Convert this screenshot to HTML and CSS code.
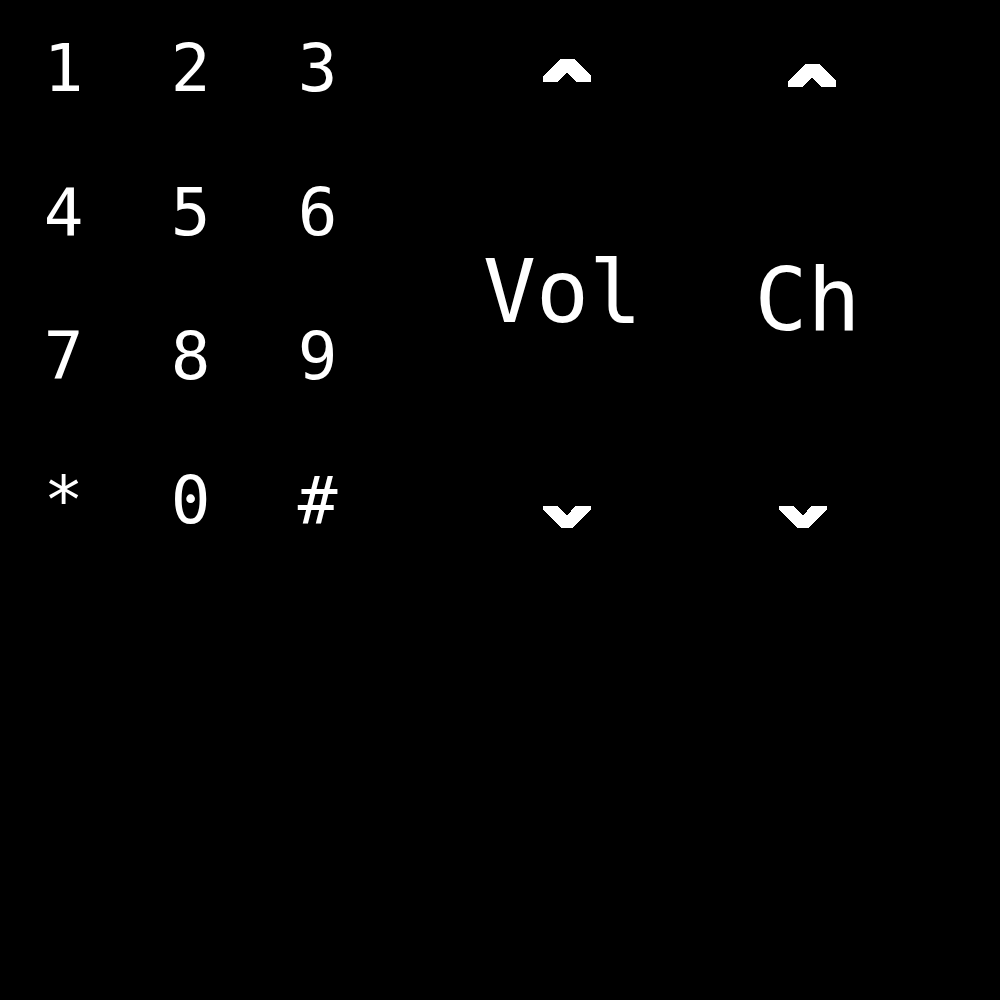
FILE: index.html
```html
<!DOCTYPE html>
<html>
<head>
<meta charset="utf-8">
<link rel="stylesheet" href="styles.css">
</head>
<body>
<div class="remote">
  <div class="keypad">
    <span class="key">1</span><span class="key">2</span><span class="key">3</span>
    <span class="key">4</span><span class="key">5</span><span class="key">6</span>
    <span class="key">7</span><span class="key">8</span><span class="key">9</span>
    <span class="key">*</span><span class="key">0</span><span class="key">#</span>
  </div>
  <div class="rockers">
    <div class="rocker rocker-vol">
      <svg class="arrow arrow-up arrow-vol" width="48" height="23" viewBox="0 0 48 23"><polygon points="0,23 0,17 17,0 31,0 48,17 48,23 33,23 24,13 15,23" fill="#fff"/></svg>
      <span class="label">Vol</span>
      <svg class="arrow arrow-down arrow-vol" width="48" height="22" viewBox="0 0 48 22"><polygon points="0,0 15,0 24,10 32,0 48,0 48,4 29,22 19,22 0,4" fill="#fff"/></svg>
    </div>
    <div class="rocker rocker-ch">
      <svg class="arrow arrow-up arrow-ch-up" width="48" height="23" viewBox="0 0 48 23"><polygon points="0,23 0,17 17,0 31,0 48,17 48,23 33,23 24,13 15,23" fill="#fff"/></svg>
      <span class="label">Ch</span>
      <svg class="arrow arrow-down arrow-ch-down" width="48" height="22" viewBox="0 0 48 22"><polygon points="0,0 15,0 24,10 32,0 48,0 48,4 29,22 19,22 0,4" fill="#fff"/></svg>
    </div>
  </div>
</div>
</body>
</html>
```

FILE: styles.css
```css
html, body {
  margin: 0;
  padding: 0;
  background: #000;
  height: 100%;
}
body {
  color: #fff;
  font-family: "DejaVu Sans Mono", "Liberation Mono", monospace;
}
.remote {
  display: flex;
  gap: 59px;
}
.keypad {
  display: grid;
  grid-template-columns: repeat(3, 127px);
  grid-auto-rows: 144px;
  padding-top: 36px;
}
.key {
  font-size: 66px;
  line-height: 1;
  text-align: center;
}
.rockers {
  display: grid;
  grid-template-columns: repeat(2, 245px);
}
.rocker {
  display: flex;
  flex-direction: column;
  align-items: center;
}
.rocker-vol {
  padding-top: 59px;
}
.rocker-ch {
  padding-top: 64px;
}
.label {
  font-size: 88px;
  line-height: 1;
  height: 88px;
}
.arrow {
  display: block;
  shape-rendering: crispEdges;
}
.arrow-vol {
  margin-left: 8px;
}
.arrow-ch-up {
  margin-left: 8px;
}
.rocker-vol .label {
  margin-top: 166px;
}
.rocker-vol .arrow-down {
  margin-top: 170px;
}
.rocker-ch .label {
  margin-top: 169px;
}
.rocker-ch .arrow-down {
  margin-top: 162px;
}
.arrow-ch-down {
  margin-right: 10px;
}
```
